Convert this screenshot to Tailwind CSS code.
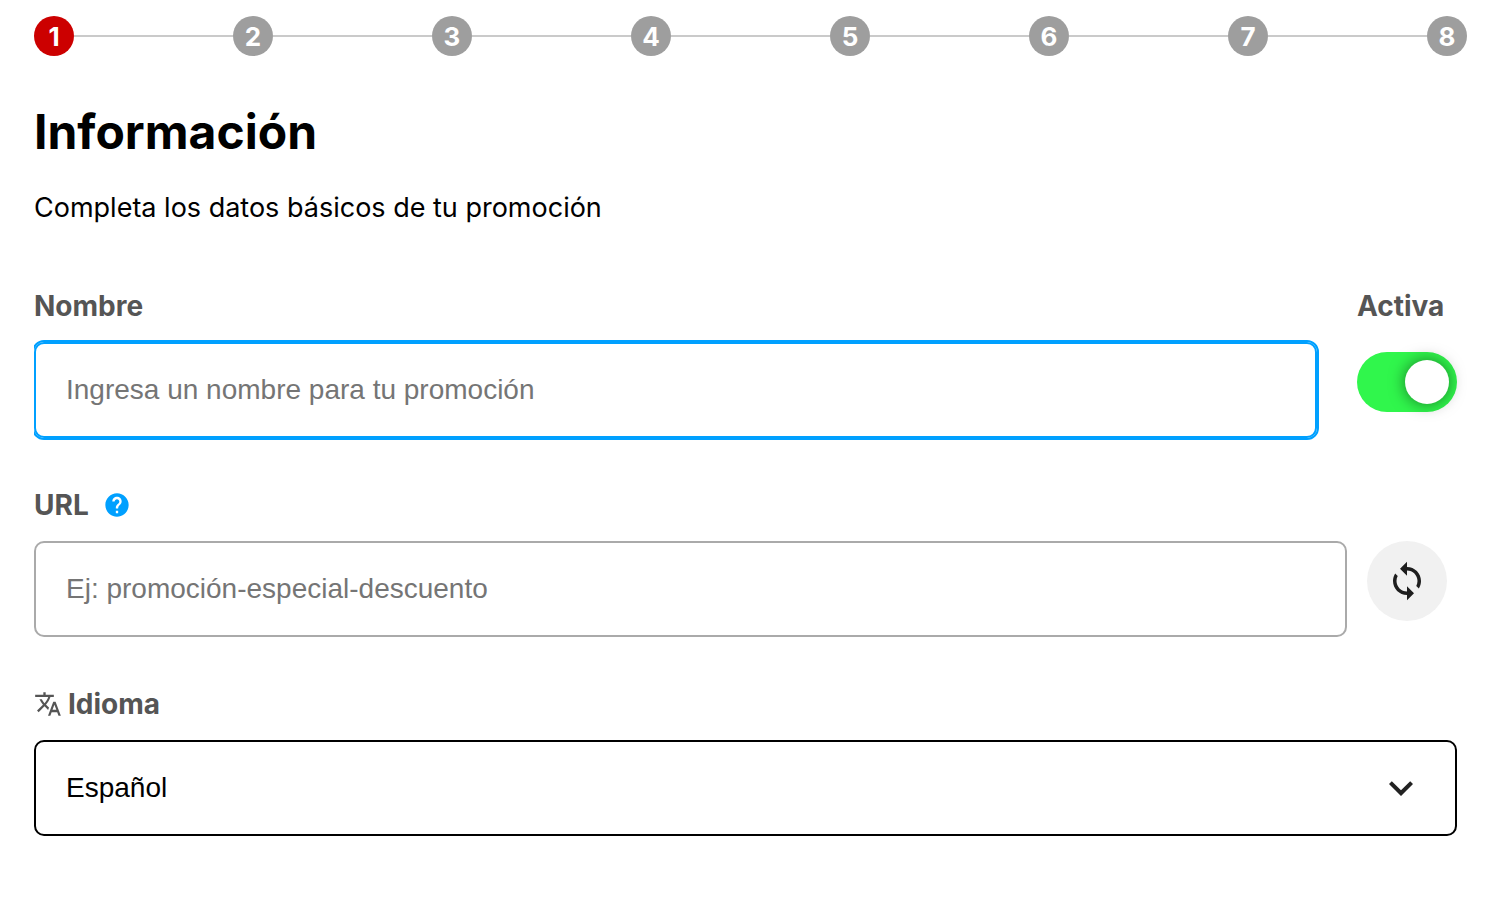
<!DOCTYPE html>
<html lang="es">
<head>
  <meta charset="UTF-8">
  <meta name="viewport" content="width=device-width, initial-scale=1.0">
  <title>Información</title>
  <script src="https://cdn.jsdelivr.net/npm/@tailwindcss/browser@4"></script>
</head>
<body class="bg-white text-black font-[Inter,sans-serif] text-[28px] leading-9">
  <main class="pt-4 pb-10 pl-[34px] pr-[31px]">
    <!-- Steps -->
    <ol class="flex items-center -mr-[10px] text-[26px] leading-[42px] font-bold text-white text-center">
      <li class="size-10 shrink-0 rounded-full bg-[#cc0000]" aria-current="step">1</li>
      <li class="h-[2px] flex-1 bg-[#cacaca]" aria-hidden="true"></li>
      <li class="size-10 shrink-0 rounded-full bg-[#9e9e9e]">2</li>
      <li class="h-[2px] flex-1 bg-[#cacaca]" aria-hidden="true"></li>
      <li class="size-10 shrink-0 rounded-full bg-[#9e9e9e]">3</li>
      <li class="h-[2px] flex-1 bg-[#cacaca]" aria-hidden="true"></li>
      <li class="size-10 shrink-0 rounded-full bg-[#9e9e9e]">4</li>
      <li class="h-[2px] flex-1 bg-[#cacaca]" aria-hidden="true"></li>
      <li class="size-10 shrink-0 rounded-full bg-[#9e9e9e]">5</li>
      <li class="h-[2px] flex-1 bg-[#cacaca]" aria-hidden="true"></li>
      <li class="size-10 shrink-0 rounded-full bg-[#9e9e9e]">6</li>
      <li class="h-[2px] flex-1 bg-[#cacaca]" aria-hidden="true"></li>
      <li class="size-10 shrink-0 rounded-full bg-[#9e9e9e]">7</li>
      <li class="h-[2px] flex-1 bg-[#cacaca]" aria-hidden="true"></li>
      <li class="size-10 shrink-0 rounded-full bg-[#9e9e9e]">8</li>
    </ol>

    <h1 class="mt-12 text-5xl leading-14 font-bold">Información</h1>
    <p class="mt-[30px] text-[27px] leading-9">Completa los datos básicos de tu promoción</p>

    <form class="mt-[62px] flex flex-col gap-[49px]">
      <!-- Nombre + Activa -->
      <div class="flex gap-10">
        <div class="flex-1 flex flex-col gap-[18px]">
          <label for="nombre" class="font-bold text-[#555]">Nombre</label>
          <input id="nombre" type="text" placeholder="Ingresa un nombre para tu promoción" class="w-full h-24 px-[30px] rounded-[10px] border-2 border-[#00a0ff] outline-2 outline-[#00a0ff] [clip-path:inset(-2px_-2px_-2px_0)] font-['Liberation_Sans',sans-serif] placeholder:text-[#757575]">
        </div>
        <div class="w-[100px] flex flex-col gap-7">
          <label for="activa" class="font-bold text-[#555]">Activa</label>
          <input id="activa" type="checkbox" checked class="appearance-none flex items-center w-[100px] h-[60px] px-2 rounded-full bg-[#ccc] checked:bg-[#30f64c] checked:justify-end before:block before:size-11 before:rounded-full before:bg-white before:shadow-[0_0_16px_rgba(0,0,0,0.5)]">
        </div>
      </div>

      <!-- URL -->
      <div class="flex flex-col gap-[18px]">
        <div class="flex items-center gap-[14px]">
          <label for="url" class="font-bold text-[#555]">URL</label>
          <button type="button" aria-label="Ayuda" class="text-[#00a0ff]">
            <svg class="size-7" viewBox="0 0 24 24" fill="currentColor"><path d="M12 2C6.48 2 2 6.48 2 12s4.48 10 10 10 10-4.48 10-10S17.52 2 12 2zm1 17h-2v-2h2v2zm2.07-7.75l-.9.92C13.45 12.9 13 13.5 13 15h-2v-.5c0-1.1.45-2.1 1.17-2.83l1.24-1.26c.37-.36.59-.86.59-1.41 0-1.1-.9-2-2-2s-2 .9-2 2H8c0-2.21 1.79-4 4-4s4 1.79 4 4c0 .88-.36 1.68-.93 2.25z"/></svg>
          </button>
        </div>
        <div class="flex items-start gap-5 pr-[10px]">
          <input id="url" type="text" placeholder="Ej: promoción-especial-descuento" class="flex-1 min-w-0 h-24 px-[30px] rounded-[10px] border-2 border-[#aaa] font-['Liberation_Sans',sans-serif] placeholder:text-[#757575]">
          <button type="button" aria-label="Generar URL" class="size-20 shrink-0 flex items-center justify-center rounded-full bg-[#f1f1f1] text-[#1e1e1e]">
            <svg class="size-[42px]" viewBox="0 0 24 24" fill="currentColor"><path d="M12 4V1L8 5l4 4V6c3.31 0 6 2.69 6 6 0 1.01-.25 1.97-.7 2.8l1.46 1.46C19.54 15.03 20 13.57 20 12c0-4.42-3.58-8-8-8zm0 14c-3.31 0-6-2.69-6-6 0-1.01.25-1.97.7-2.8L5.24 7.74C4.46 8.97 4 10.43 4 12c0 4.42 3.58 8 8 8v3l4-4-4-4v3z"/></svg>
          </button>
        </div>
      </div>

      <!-- Idioma -->
      <div class="flex flex-col gap-[18px]">
        <label for="idioma" class="flex items-center gap-[6px] font-bold text-[#555]">
          <svg class="size-7" viewBox="0 0 24 24" fill="currentColor"><path d="M12.87 15.07l-2.54-2.51.03-.03c1.74-1.94 2.98-4.17 3.71-6.53H17V4h-7V2H8v2H1v1.99h11.17C11.5 7.92 10.44 9.75 9 11.35 8.07 10.32 7.3 9.19 6.69 8h-2c.73 1.63 1.73 3.17 2.98 4.56l-5.09 5.02L4 19l5-5 3.11 3.11.76-2.04zM18.5 10h-2L12 22h2l1.12-3h4.75L21 22h2l-4.5-12zm-2.62 7l1.62-4.33L19.12 17h-3.24z"/></svg>
          Idioma
        </label>
        <div class="relative">
          <select id="idioma" class="appearance-none w-full h-24 px-[30px] rounded-[10px] border-2 border-black bg-white font-['Liberation_Sans',sans-serif]">
            <option>Español</option>
          </select>
          <svg class="absolute right-8 inset-y-0 my-auto size-12 text-[#222] pointer-events-none" viewBox="0 0 24 24" fill="currentColor"><path d="M16.59 8.59L12 13.17 7.41 8.59 6 10l6 6 6-6z"/></svg>
        </div>
      </div>
    </form>
  </main>
</body>
</html>
